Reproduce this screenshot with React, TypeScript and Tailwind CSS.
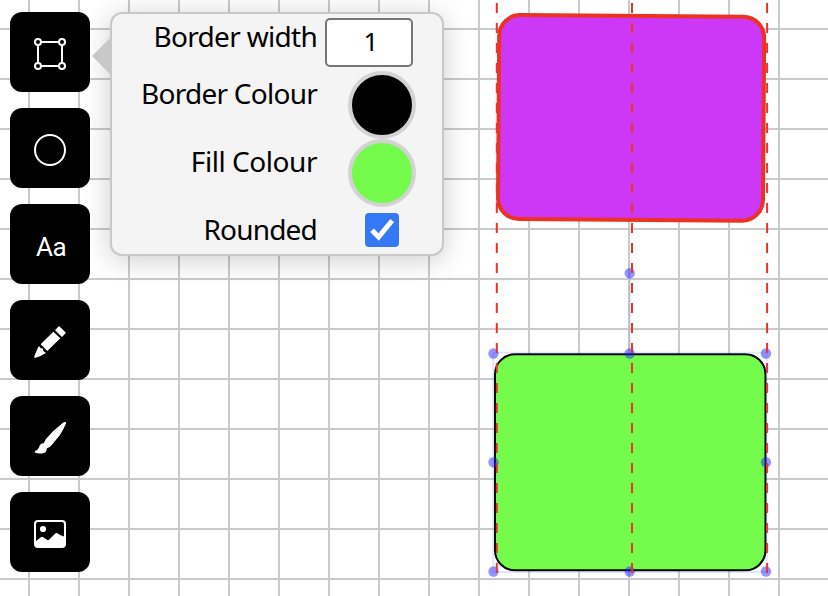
import type { ReactNode } from "react";

const gridX = Array.from({ length: 16 }, (_, i) => 29 + i * 50);
const gridY = Array.from({ length: 12 }, (_, i) => 29 + i * 50);
const handles = [
  [629.7, 273.3], [493.5, 353.5], [629.7, 353.5], [766, 353.5],
  [493.5, 462.3], [766, 462.3], [493.5, 571.5], [629.7, 571.5], [766, 571.5],
];

function Canvas() {
  return (
    <svg className="absolute inset-0" width="828" height="596" viewBox="0 0 828 596">
      <g stroke="#cacaca" strokeWidth="2">
        {gridX.map((x) => <path key={x} d={`M${x} 0V596`} />)}
        {gridY.map((y) => <path key={y} d={`M0 ${y}H828`} />)}
      </g>
      <rect x="498.6" y="15.9" width="265" height="204" rx="21" fill="#cc38f5" stroke="#ec3323" strokeWidth="4" transform="rotate(0.4 631 118)" />
      <rect x="495" y="354.3" width="270.5" height="216" rx="20" fill="#75fb4c" stroke="#000" strokeWidth="2" />
      <path d="M629.7 273V353M493.3 352.7H766.5V572H493.3Z" fill="none" stroke="#6496ff" strokeOpacity=".22" strokeWidth="2" />
      {handles.map(([x, y]) => <circle key={`${x}-${y}`} cx={x} cy={y} r="5.2" fill="#2020ff" fillOpacity=".48" />)}
      <g stroke="#ec3328" strokeWidth="2" strokeDasharray="10 10">
        <path d="M496.8 3V573" />
        <path d="M632 3V573" />
        <path d="M767.1 3V573" />
      </g>
    </svg>
  );
}

function Tool({ label, children }: { label: string; children: ReactNode }) {
  return (
    <button aria-label={label} className="flex h-20 w-20 items-center justify-center rounded-xl bg-black text-white">
      {children}
    </button>
  );
}

function Icon({ children }: { children: ReactNode }) {
  return <svg className="overflow-visible" width="32" height="32" viewBox="0 0 32 32" fill="currentColor">{children}</svg>;
}

function Toolbar() {
  return (
    <nav className="flex w-20 flex-col gap-4">
      <Tool label="Rectangle">
        <Icon>
          <g fill="none" stroke="currentColor" strokeWidth="2">
            <path d="M7 6H25M7 30H25M4 9V27M28 9V27" />
            <circle cx="4" cy="6" r="3" /><circle cx="28" cy="6" r="3" />
            <circle cx="4" cy="30" r="3" /><circle cx="28" cy="30" r="3" />
          </g>
        </Icon>
      </Tool>
      <Tool label="Circle">
        <Icon><circle cx="16" cy="18" r="15" fill="none" stroke="currentColor" strokeWidth="2" /></Icon>
      </Tool>
      <Tool label="Text">
        <span className="pt-1.5 pl-0.5 font-['Roboto',sans-serif] text-[26px] leading-8 font-normal tracking-[-0.5px]">Aa</span>
      </Tool>
      <Tool label="Pencil">
        <Icon>
          <path d="M25 2L32 8.7L28 13L21 6.3ZM19.3 7.7L26.3 14.3L13.3 27L6.7 20.3ZM5 22L6.4 24.1L8.8 24.5L9.3 27L12 29L6 32.3L.6 34L.2 32.5L3.5 24.5Z" />
        </Icon>
      </Tool>
      <Tool label="Brush">
        <Icon>
          <path d="M32 2.2Q30.5 1.5 28.7 3L19 11.3L11.7 19.3L9.7 23.3C6.8 23.5 5.6 24.7 5 27.5Q4 29.8 1 31L.6 32.5C4 33.8 8.5 34 11.5 32.2C12.5 31 12.2 30 13 28.3Q16 27.5 18.2 24.5L26 15Q29.5 9.5 32 3.5Z" />
        </Icon>
      </Tool>
      <Tool label="Image">
        <Icon>
          <rect x="1" y="5" width="30" height="26" rx="3" fill="none" stroke="currentColor" strokeWidth="2" />
          <circle cx="9" cy="13" r="3.1" />
          <path d="M1 26L6.8 21.2Q8 20.2 9.2 21.2L13 23.8Q14.2 24.7 15.3 23.6L21 17.8Q22.3 16.5 23.8 17.6L27 19.5L31 20.7V29Q31 31 28 31H4Q1 31 1 28Z" />
        </Icon>
      </Tool>
    </nav>
  );
}

const labelClass = "w-[205px] text-right text-[28px] leading-8 whitespace-nowrap";

function Settings() {
  return (
    <section className="relative h-[244px] w-[334px] rounded-xl border-2 border-[#c8c8c8] bg-[#f4f4f4] pt-1 shadow-[0_4px_28px_rgba(0,0,0,0.2)]">
      <svg className="absolute top-6 -left-5" width="18" height="36" viewBox="0 0 18 36"><path d="M18 0V36L0 18Z" fill="#c8c8c8" /></svg>
      <div className="flex h-[53px] items-start">
        <div className={`${labelClass} pt-0.5 tracking-[-0.7px]`}>Border width</div>
        <div className="ml-2 flex h-[49px] w-[88px] items-center justify-center rounded-[5px] border-2 border-[#757575] bg-white pb-0.5 pl-1 text-[26px]">1</div>
      </div>
      <div className="flex h-[68px] items-start">
        <div className={`${labelClass} pt-1.5 tracking-[-0.75px]`}>Border Colour</div>
        <div className="ml-[31px] h-[68px] w-[68px] rounded-full border-4 border-[#d3d3d3] bg-black" />
      </div>
      <div className="flex h-[68px] items-start">
        <div className={`${labelClass} pt-1.5 tracking-[-0.45px]`}>Fill Colour</div>
        <div className="ml-[31px] h-[68px] w-[68px] rounded-full border-4 border-[#d3d3d3] bg-[#75fb4c]" />
      </div>
      <div className="flex items-start">
        <div className={`${labelClass} pt-1.5 tracking-[-0.8px]`}>Rounded</div>
        <div className="mt-[6px] ml-12 h-[34px] w-[34px] rounded-[4px] bg-[#3478f6]">
          <svg width="34" height="34" viewBox="0 0 34 34"><path d="M7 17.2L13.6 24L27.2 7.5" fill="none" stroke="white" strokeWidth="5" /></svg>
        </div>
      </div>
    </section>
  );
}

export default function App() {
  return (
    <main className="relative h-[596px] w-[828px] overflow-hidden bg-white font-['Noto_Sans',sans-serif] text-black">
      <Canvas />
      <div className="relative flex items-start gap-5 pt-3 pl-2.5">
        <Toolbar />
        <Settings />
      </div>
    </main>
  );
}
